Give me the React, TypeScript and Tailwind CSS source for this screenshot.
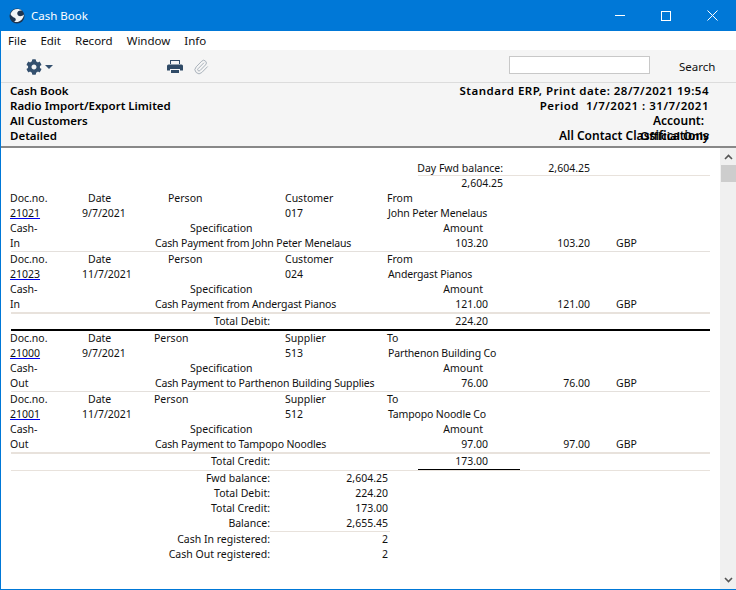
import React from 'react';
import { FaCog } from 'react-icons/fa';
import { Paperclip } from 'lucide-react';

// one detail block: header, values, spec label, spec values
type Entry = {
  no: string;
  date: string;
  partyLabel: string;
  partyCode: string;
  dirLabel: string;
  party: string;
  kind: string;
  text: string;
  amount: string;
};

function EntryBlock({ e, last, supplier }: { e: Entry; last: boolean; supplier?: boolean }) {
  return (
    <div className={last ? 'h-[62px] relative' : 'h-[61px] relative'}>
      <div className={`grid h-[15px] ${supplier ? 'grid-cols-[78px_66px_131px_102px_1fr]' : 'grid-cols-[78px_80px_117px_102px_1fr]'}`}>
        <div>Doc.no.</div>
        <div>Date</div>
        <div>Person</div>
        <div>{e.partyLabel}</div>
        <div>{e.dirLabel}</div>
      </div>
      <div className="grid grid-cols-[72px_203px_102px_1fr] h-[15px]">
        <div className="underline decoration-[#0000ee]">{e.no}</div>
        <div>{e.date}</div>
        <div>{e.partyCode}</div>
        <div className="pl-[1px] tracking-[-0.15px]">{e.party}</div>
      </div>
      <div className="grid grid-cols-[180px_293px] h-[15px]">
        <div>Cash-</div>
        <div className="flex justify-between">
          <span>Specification</span>
          <span>Amount</span>
        </div>
      </div>
      <div className="grid grid-cols-[145px_333px_102px_1fr] h-[15px]">
        <div>{e.kind}</div>
        <div className="flex justify-between whitespace-nowrap">
          <span className="tracking-[-0.15px]">{e.text}</span>
          <span>{e.amount}</span>
        </div>
        <div className="text-right">{e.amount}</div>
        <div className="pl-[26px]">GBP</div>
      </div>
      <div className={`ml-[1px] ${last ? 'h-[2px] bg-[#e8e2dc]' : 'h-px bg-[#e4e0dc]'}`} />
    </div>
  );
}

const debit: Entry[] = [
  { no: '21021', date: '9/7/2021', partyLabel: 'Customer', partyCode: '017', dirLabel: 'From', party: 'John Peter Menelaus', kind: 'In', text: 'Cash Payment from John Peter Menelaus', amount: '103.20' },
  { no: '21023', date: '11/7/2021', partyLabel: 'Customer', partyCode: '024', dirLabel: 'From', party: 'Andergast Pianos', kind: 'In', text: 'Cash Payment from Andergast Pianos', amount: '121.00' },
];

const credit: Entry[] = [
  { no: '21000', date: '9/7/2021', partyLabel: 'Supplier', partyCode: '513', dirLabel: 'To', party: 'Parthenon Building Co', kind: 'Out', text: 'Cash Payment to Parthenon Building Supplies', amount: '76.00' },
  { no: '21001', date: '11/7/2021', partyLabel: 'Supplier', partyCode: '512', dirLabel: 'To', party: 'Tampopo Noodle Co', kind: 'Out', text: 'Cash Payment to Tampopo Noodles', amount: '97.00' },
];

const summary = [
  ['Fwd balance:', '2,604.25'],
  ['Total Debit:', '224.20'],
  ['Total Credit:', '173.00'],
];

export default function App() {
  return (
    <div className="w-[736px] h-[590px] flex flex-col overflow-hidden border-l border-b border-[#0078d7] bg-white text-[10.5px] leading-[15px] text-[#111] font-['Noto_Sans','Liberation_Sans',sans-serif]">
      {/* title bar */}
      <div className="h-[31px] shrink-0 bg-[#0078d7] flex items-center text-white pl-[8px]">
        <svg width="16" height="16" viewBox="0 0 16 16">
          <circle cx="8" cy="8" r="7.500" fill="#1f3550" />
          <path d="M1.500 6 C3 1 9 -0.500 13 2.500 C9.500 2 7.500 4 8.500 6.500 C9.500 9 13 8.500 15 6.500 C14.500 12 9 15.500 5 13.500 C7.500 13 7 10.500 5.500 9.800 C4 9 2 8 1.500 6 Z" fill="#f2f4f6" />
        </svg>
        <span className="ml-[6px] text-[11.5px] -mt-[1px]">Cash Book</span>
        <div className="ml-auto flex items-center pr-[1px]">
          <div className="w-[46px] flex justify-center"><div className="w-[10px] h-px bg-white" /></div>
          <div className="w-[46px] flex justify-center"><div className="w-[10px] h-[10px] border border-white" /></div>
          <div className="w-[46px] flex justify-center">
            <svg width="11" height="11" viewBox="0 0 11 11" stroke="white" strokeWidth="1"><path d="M0.500 0.500 L10.500 10.500 M10.500 0.500 L0.500 10.500" /></svg>
          </div>
        </div>
      </div>
      {/* menu */}
      <div className="h-[19px] shrink-0 flex items-center gap-[14px] pl-[7px] bg-white text-[11.5px]">
        <span>File</span><span>Edit</span><span>Record</span><span>Window</span><span>Info</span>
      </div>
      {/* toolbar */}
      <div className="h-[33px] shrink-0 bg-[#f5f5f5] border-b border-[#dcdcdc] flex items-center pl-[25px] pt-[1px]">
        <FaCog size={16} color="#34506e" />
        <div className="ml-[3px] w-0 h-0 border-x-[4px] border-x-transparent border-t-[4px] border-t-[#34506e]" />
        <svg className="ml-[114px]" width="16" height="13" viewBox="0 0 16 13" fill="#2f4a66">
          <path fillRule="evenodd" d="M3 0h10v4h-1V1H4v3H3z" />
          <path d="M1.500 4.500h13A1.500 1.500 0 0 1 16 6v4.500h-3V9H3v1.500H0V6a1.500 1.500 0 0 1 1.500-1.500z" />
          <path d="M4 10h8v3H4z" />
        </svg>
        <Paperclip size={16} color="#a9b2bb" strokeWidth={1.500} className="ml-[10px]" />
        <input className="ml-[300px] w-[141px] h-[18px] -mt-[3px] bg-white border border-[#c8c8c8]" />
        <span className="ml-[29px] text-[11.5px]">Search</span>
      </div>
      {/* report header */}
      <div className="h-[65px] shrink-0 bg-[#f5f5f5] border-b-2 border-[#888] pl-[9px] pr-[27px] text-[11.5px] font-semibold text-black">
        <div className="flex justify-between"><span>Cash Book</span><span className="tracking-[0.5px]">Standard ERP, Print date: 28/7/2021 19:54</span></div>
        <div className="flex justify-between"><span>Radio Import/Export Limited</span><span className="tracking-[0.5px]">Period&nbsp;&nbsp;1/7/2021 : 31/7/2021</span></div>
        <div className="flex justify-between"><span>All Customers</span><span className="pr-[5px] text-[12px]">Account:</span></div>
        <div className="flex justify-between relative">
          <span>Detailed</span>
          <span className="text-[12px]">All Contact Classifications</span>
          <span className="absolute right-0 top-0">Official Only</span>
        </div>
      </div>
      {/* report body + scrollbar */}
      <div className="flex-1 flex min-h-0">
        <div className="flex-1 pl-[9px] pr-[10px] pt-[13px] min-w-0">
          <div className="h-[15px] flex border-b border-[#e8e2dc] ml-[408px] whitespace-nowrap">
            <span className="w-[85px] flex justify-end">Day Fwd balance:</span>
            <span className="w-[87px] text-right">2,604.25</span>
          </div>
          <div className="h-[15px] ml-[408px] w-[85px] text-right">2,604.25</div>
          {debit.map((e, i) => <EntryBlock key={e.no} e={e} last={i === debit.length - 1} />)}
          <div className="h-[15px] grid grid-cols-[260px_218px]">
            <div className="text-right">Total Debit:</div>
            <div className="text-right">224.20</div>
          </div>
          <div className="h-[2px] bg-black ml-[1px]" />
          {credit.map((e, i) => <EntryBlock key={e.no} e={e} supplier last={i === credit.length - 1} />)}
          <div className="h-[17px] border-b border-[#e8e2dc] grid grid-cols-[260px_148px_102px] ml-[1px]">
            <div className="text-right -ml-[1px] pr-[1px]">Total Credit:</div>
            <div />
            <div className="text-right pr-[32px] border-b border-black h-[16px] -ml-[1px] mr-[1px]">173.00</div>
          </div>
          {summary.map(([label, value]) => (
            <div key={label} className="h-[15px] grid grid-cols-[260px_118px]">
              <div className="text-right">{label}</div>
              <div className="text-right">{value}</div>
            </div>
          ))}
          <div className="h-[16px] grid grid-cols-[260px_46px_74px]">
            <div className="text-right">Balance:</div>
            <div />
            <div className="border-b border-[#e8e2dc] h-[16px] text-right pr-[2px] -ml-[46px]">2,655.45</div>
          </div>
          {[['Cash In registered:', '2'], ['Cash Out registered:', '2']].map(([label, value]) => (
            <div key={label} className="h-[15px] grid grid-cols-[260px_118px]">
              <div className="text-right">{label}</div>
              <div className="text-right">{value}</div>
            </div>
          ))}
        </div>
        <div className="w-[16px] shrink-0 bg-[#f0f0f0] flex flex-col items-center pt-[6px] pb-[6px]">
          <svg width="9" height="6" viewBox="0 0 9 6" fill="none" stroke="#555" strokeWidth="1.600"><path d="M1 5 L4.500 1.500 L8 5" /></svg>
          <div className="w-[15px] h-[17px] bg-[#cdcdcd] mt-[5px]" />
          <svg className="mt-auto" width="9" height="6" viewBox="0 0 9 6" fill="none" stroke="#555" strokeWidth="1.600"><path d="M1 1 L4.500 4.500 L8 1" /></svg>
        </div>
      </div>
    </div>
  );
}
